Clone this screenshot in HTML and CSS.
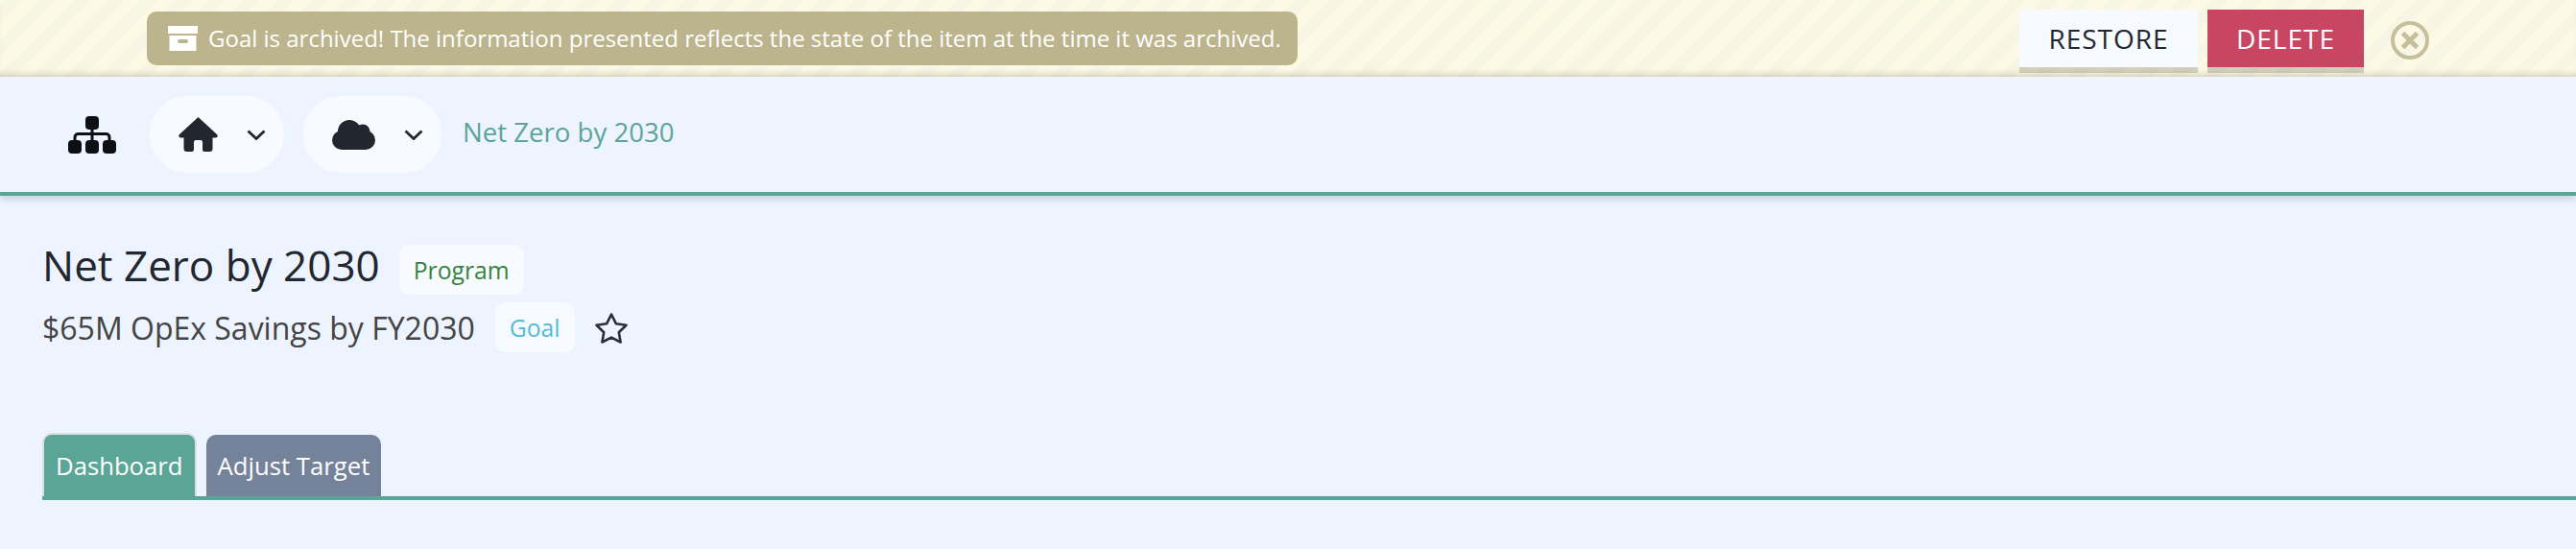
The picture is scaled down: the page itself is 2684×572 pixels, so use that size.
FILE: index.html
```html
<!DOCTYPE html>
<html>
<head>
  <meta charset="utf-8">
  <title>Net Zero by 2030</title>
  <link rel="stylesheet" href="styles.css">
</head>
<body>
<div class="banner">
  <div class="banner-msg">
    <svg class="archive-icon" viewBox="0 0 31 26"><path d="M0 0h31v8H0zM1.500 10h28v16h-28z" fill="#fff"/><rect x="10" y="14" width="11" height="4" rx="2" fill="#bcb48d"/></svg>
    <span class="banner-text">Goal is archived! The information presented reflects the state of the item at the time it was archived.</span>
  </div>
  <div class="banner-actions">
    <button class="btn btn-restore">RESTORE</button>
    <button class="btn btn-delete">DELETE</button>
    <svg class="close-icon" viewBox="0 0 40 40"><circle cx="20" cy="20" r="18" fill="none" stroke="#c6bf9c" stroke-width="4"/><path d="M12.500 12.500l15 15M27.500 12.500l-15 15" stroke="#c6bf9c" stroke-width="5" fill="none"/></svg>
  </div>
</div>

<nav class="crumbs">
  <svg class="sitemap-icon" viewBox="0 0 50 39">
    <rect x="18" y="0" width="14" height="14" rx="4"/>
    <rect x="0" y="25" width="14" height="14" rx="4"/>
    <rect x="18" y="25" width="14" height="14" rx="4"/>
    <rect x="36" y="25" width="14" height="14" rx="4"/>
    <path d="M25 13v13M7 26v-4a3.500 3.500 0 0 1 3.500-3.500h29a3.500 3.500 0 0 1 3.500 3.500v4" fill="none" stroke="#0d0f12" stroke-width="3"/>
  </svg>
  <div class="crumb-pill">
    <svg class="home-icon" viewBox="0 0 41 36"><path d="M20.500 0L40 18q2 2.500-1 3.500h-3.500V33q0 3-3 3H27q-2 0-2-2v-8q0-2-2-2h-5q-2 0-2 2v8q0 2-2 2H8.500q-3 0-3-3V21.500H2q-3-1-1-3.500z"/></svg>
    <svg class="chev" viewBox="0 0 20 11"><path d="M1.500 1.500l8.500 8 8.500-8" fill="none" stroke="#22262e" stroke-width="2.800"/></svg>
  </div>
  <div class="crumb-pill">
    <svg class="cloud-icon" viewBox="0 0 45 31">
      <circle cx="18" cy="12" r="12"/>
      <circle cx="32" cy="12" r="7.500"/>
      <circle cx="10" cy="21" r="10"/>
      <circle cx="35" cy="21" r="10"/>
      <rect x="10" y="14" width="25" height="17"/>
    </svg>
    <svg class="chev" viewBox="0 0 20 11"><path d="M1.500 1.500l8.500 8 8.500-8" fill="none" stroke="#22262e" stroke-width="2.800"/></svg>
  </div>
  <span class="crumb-link">Net Zero by 2030</span>
</nav>

<main class="content">
  <div class="title-row">
    <h1 class="title">Net Zero by 2030</h1>
    <span class="tag tag-program">Program</span>
  </div>
  <div class="sub-row">
    <h2 class="subtitle">$65M OpEx Savings by FY2030</h2>
    <span class="tag tag-goal">Goal</span>
    <svg class="star-icon" viewBox="0 0 36 33"><path d="M18 2.500l4.800 9.700 10.700 1.500-7.700 7.500 1.800 10.300L18 26.600 8.400 31.500l1.800-10.300-7.700-7.500 10.700-1.500z" fill="none" stroke="#2b2f36" stroke-width="2.600" stroke-linejoin="round"/></svg>
  </div>
  <div class="tabs">
    <div class="tab tab-active">Dashboard</div>
    <div class="tab">Adjust Target</div>
  </div>
</main>
</body>
</html>
```

FILE: styles.css
```css
* {
  box-sizing: border-box;
}

body {
  margin: 0;
  height: 572px;
  overflow: hidden;
  background: #edf4ff;
  font-family: "Open Sans", sans-serif;
  color: #22262e;
}

/* Archived banner */
.banner {
  height: 80px;
  display: flex;
  align-items: center;
  justify-content: space-between;
  padding: 0 153px;
  background: repeating-linear-gradient(-45deg, #fdf9e4 0, #fdf9e4 13px, #f7f5e3 13px, #f7f5e3 25px);
  box-shadow: inset 0 -7px 6px -4px rgba(90, 85, 60, 0.22);
}

.banner-msg {
  width: 1199px;
  height: 56px;
  display: flex;
  align-items: center;
  gap: 11px;
  padding-left: 22px;
  background: #bcb48d;
  border-radius: 10px;
  color: #fff;
}

.archive-icon {
  flex: none;
  width: 31px;
  height: 26px;
}

.banner-text {
  margin-bottom: 2px;
  font-size: 24px;
  white-space: nowrap;
}

.banner-actions {
  display: flex;
  align-items: center;
  gap: 10px;
}

.btn {
  height: 60px;
  border: 0;
  border-radius: 0;
  font-family: inherit;
  font-size: 28px;
  letter-spacing: 1px;
  box-shadow: 0 6px 0 rgba(70, 70, 50, 0.22);
}

.btn-restore {
  width: 186px;
  background: #f7faff;
  color: #22262e;
}

.btn-delete {
  width: 163px;
  background: #c94663;
  color: #fff;
}

.close-icon {
  width: 40px;
  height: 40px;
  margin: 4px 0 0 18px;
}

/* Breadcrumb bar */
.crumbs {
  height: 124px;
  display: flex;
  align-items: center;
  padding-left: 71px;
  border-bottom: 4px solid #5ba597;
  box-shadow: 0 4px 6px rgba(60, 70, 90, 0.18);
}

.sitemap-icon {
  flex: none;
  width: 50px;
  height: 39px;
  margin-right: 35px;
  fill: #0d0f12;
}

.crumb-pill {
  height: 80px;
  display: flex;
  align-items: center;
  gap: 30px;
  padding: 0 19px 0 30px;
  margin-right: 20px;
  border-radius: 40px;
  background: #f7faff;
}

.home-icon {
  width: 41px;
  height: 36px;
  fill: #22262e;
}

.cloud-icon {
  width: 45px;
  height: 31px;
  fill: #22262e;
}

.chev {
  width: 20px;
  height: 11px;
}

.crumb-link {
  margin: 0 0 6px 2px;
  font-size: 27.600px;
  color: #5ba597;
}

/* Page heading */
.content {
  padding: 51px 0 0 44px;
}

.title-row,
.sub-row {
  display: flex;
  align-items: center;
  height: 52px;
}

.sub-row {
  margin-top: 8px;
}

.title {
  margin: 0 0 10px;
  font-size: 44px;
  font-weight: 400;
  color: #22262e;
}

.subtitle {
  margin: 0;
  font-size: 32px;
  font-weight: 400;
  color: #444;
}

.tag {
  height: 52px;
  display: flex;
  align-items: center;
  padding: 0 15px;
  border-radius: 10px;
  background: #f7faff;
  font-size: 24.700px;
}

.tag-program {
  margin-left: 20px;
  color: #37833f;
}

.tag-goal {
  margin-left: 21px;
  color: #53bbdb;
}

.star-icon {
  width: 36px;
  height: 33px;
  margin-left: 20px;
}

/* Tabs */
.tabs {
  display: flex;
  align-items: flex-end;
  gap: 10px;
  height: 154px;
  border-bottom: 4px solid #5ba597;
}

.tab {
  height: 64px;
  display: flex;
  align-items: center;
  padding: 0 12px;
  border-radius: 10px 10px 0 0;
  background: #74829a;
  color: #fff;
  font-size: 25.700px;
}

.tab-active {
  height: 66px;
  padding: 0 12px;
  background: #5ba597;
  border: 2px solid #dcdfe2;
  border-bottom: 0;
}
```
